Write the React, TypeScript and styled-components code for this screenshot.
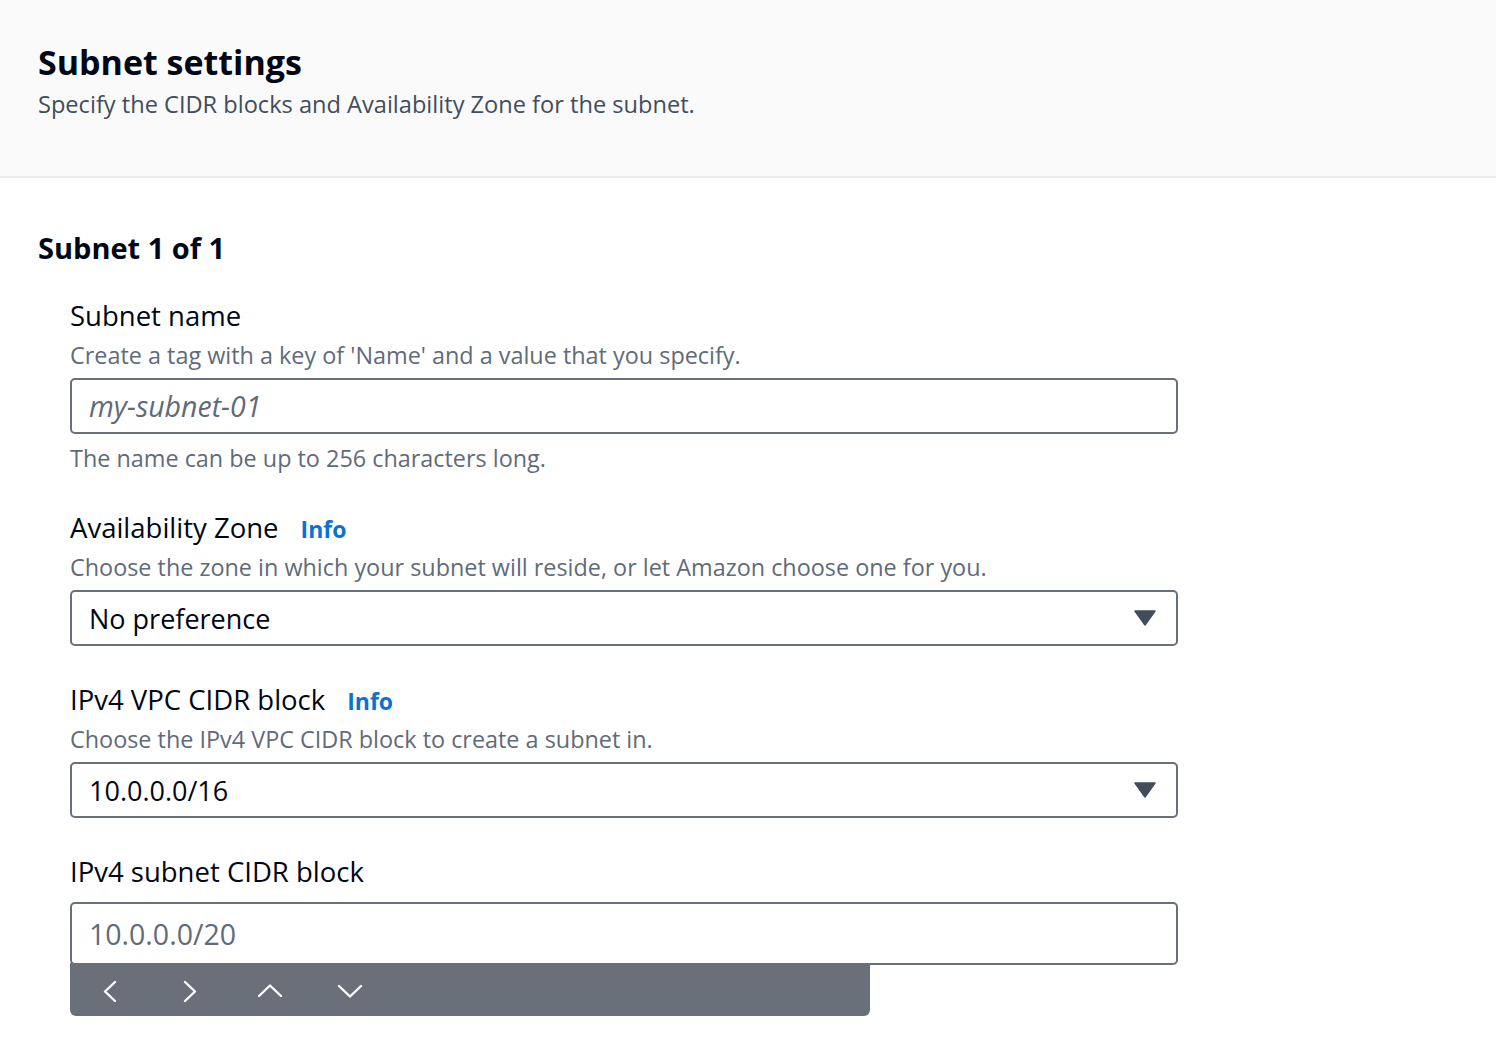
import React from 'react';
import styled, { createGlobalStyle } from 'styled-components';

const GlobalStyle = createGlobalStyle`
  html, body {
    margin: 0;
    padding: 0;
    background: #ffffff;
  }
  body {
    font-family: 'Open Sans', 'Noto Sans', sans-serif;
    color: #000716;
  }
`;

const Page = styled.div`
  width: 1496px;
  min-height: 1058px;
  background: #ffffff;
`;

const Header = styled.header`
  background: #fafafa;
  border-bottom: 2px solid #e9ebed;
  padding: 40px 38px 0;
  height: 136px;
`;

const Title = styled.h1`
  margin: 0;
  font-size: 34px;
  line-height: 44px;
  font-weight: 700;
  color: #000716;
`;

const Subtitle = styled.p`
  margin: 5px 0 0;
  font-size: 23.6px;
  line-height: 30px;
  color: #414d5c;
`;

const Body = styled.section`
  padding: 50px 38px 0;
`;

const SectionTitle = styled.h2`
  margin: 0;
  font-size: 29px;
  line-height: 40px;
  font-weight: 700;
  color: #000716;
`;

const Fields = styled.div`
  display: flex;
  flex-direction: column;
  gap: 36px;
  padding: 30px 0 0 32px;
  width: 1108px;
`;

const Field = styled.div`
  display: flex;
  flex-direction: column;
`;

const LabelRow = styled.div`
  display: flex;
  align-items: baseline;
  gap: 22px;
`;

const Label = styled.label<{ $spaced?: boolean }>`
  font-size: 27.5px;
  line-height: 36px;
  color: #000716;
  margin-bottom: ${p => (p.$spaced ? '12px' : '0')};
`;

const InfoLink = styled.a`
  font-size: 23px;
  font-weight: 700;
  color: #0972d3;
  text-decoration: none;
`;

const Description = styled.div`
  font-size: 23.4px;
  line-height: 32px;
  color: #5f6b7a;
  margin: 5px 0 7px;
`;

const Constraint = styled(Description)`
  margin: 8px 0 0;
`;

const Box = styled.div<{ $tall?: boolean }>`
  box-sizing: border-box;
  height: ${p => (p.$tall ? '63px' : '56px')};
  border: 2px solid #69707a;
  border-radius: 5px;
  display: flex;
  align-items: center;
  justify-content: space-between;
  padding: 0 20px 0 17px;
  background: #ffffff;
`;

const Value = styled.span<{ $placeholder?: boolean; $italic?: boolean }>`
  font-size: ${p => (p.$placeholder ? '28.5px' : '27px')};
  color: ${p => (p.$placeholder ? '#5f6b7a' : '#000716')};
  font-style: ${p => (p.$italic ? 'italic' : 'normal')};
`;

const InputWrap = styled.div`
  position: relative;
`;

const AccessoryBar = styled.div`
  position: absolute;
  left: 0;
  top: 61px;
  width: 800px;
  height: 53px;
  background: #69707a;
  border-radius: 0 0 6px 6px;
  display: flex;
  align-items: center;
  gap: 50px;
  padding: 2px 0 0 25px;
  box-sizing: border-box;
`;

const Caret = () => (
  <svg width="22" height="16" viewBox="0 0 22 16">
    <path d="M1 1 L21 1 L11 15 Z" fill="#414d5c" stroke="#414d5c" strokeWidth="1.5" strokeLinejoin="round" />
  </svg>
);

const Chevron = ({ d }: { d: string }) => (
  <svg width="30" height="30" viewBox="0 0 30 30">
    <path d={d} fill="none" stroke="#ffffff" strokeWidth="2.4" strokeLinecap="round" strokeLinejoin="round" />
  </svg>
);

export default function App() {
  return (
    <Page>
      <GlobalStyle />
      <Header>
        <Title>Subnet settings</Title>
        <Subtitle>Specify the CIDR blocks and Availability Zone for the subnet.</Subtitle>
      </Header>
      <Body>
        <SectionTitle>Subnet 1 of 1</SectionTitle>
        <Fields>
          <Field>
            <Label>Subnet name</Label>
            <Description>Create a tag with a key of 'Name' and a value that you specify.</Description>
            <Box>
              <Value $placeholder $italic>my-subnet-01</Value>
            </Box>
            <Constraint>The name can be up to 256 characters long.</Constraint>
          </Field>
          <Field>
            <LabelRow>
              <Label>Availability Zone</Label>
              <InfoLink>Info</InfoLink>
            </LabelRow>
            <Description>Choose the zone in which your subnet will reside, or let Amazon choose one for you.</Description>
            <Box>
              <Value>No preference</Value>
              <Caret />
            </Box>
          </Field>
          <Field>
            <LabelRow>
              <Label>IPv4 VPC CIDR block</Label>
              <InfoLink>Info</InfoLink>
            </LabelRow>
            <Description>Choose the IPv4 VPC CIDR block to create a subnet in.</Description>
            <Box>
              <Value>10.0.0.0/16</Value>
              <Caret />
            </Box>
          </Field>
          <Field>
            <Label $spaced>IPv4 subnet CIDR block</Label>
            <InputWrap>
              <Box $tall>
                <Value $placeholder>10.0.0.0/20</Value>
              </Box>
              <AccessoryBar>
                <Chevron d="M20 6 L10 15.5 L20 25" />
                <Chevron d="M10 6 L20 15.5 L10 25" />
                <Chevron d="M4 20 L15 9.5 L26 20" />
                <Chevron d="M4 10 L15 20.5 L26 10" />
              </AccessoryBar>
            </InputWrap>
          </Field>
        </Fields>
      </Body>
    </Page>
  );
}
